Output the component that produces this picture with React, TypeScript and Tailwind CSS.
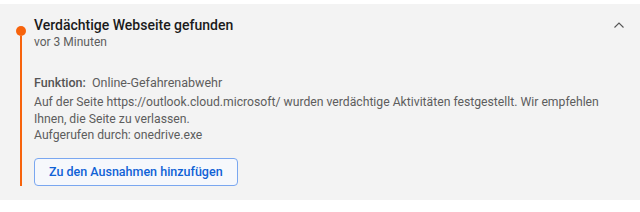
export default function App() {
  return (
    <div className="h-[212px] w-[640px] bg-white pt-1 font-['Roboto',sans-serif]">
      <div className="flex h-[196px] bg-[#f3f3f3]">
        {/* timeline */}
        <div className="ml-4 flex w-2.5 shrink-0 flex-col items-center">
          <div className="mt-[22px] h-2.5 w-2.5 rounded-full bg-[#f7630c]" />
          <div className="mb-[14px] w-0.5 flex-1 bg-[#f7630c]" />
        </div>

        <div className="ml-2 flex-1 pt-[13px]">
          <div className="flex items-start justify-between">
            <div>
              <h2 className="text-[14px] font-medium leading-[17px] text-[#1b1b1b]">Verdächtige Webseite gefunden</h2>
              <p className="text-[12px] leading-4 text-[#5d5d5d]">vor 3 Minuten</p>
            </div>
            <button className="mr-4 mt-[5px] text-[#555]">
              <svg width="10" height="6" viewBox="0 0 10 6" fill="none" stroke="currentColor" strokeWidth="1.1">
                <path d="M0.5 5.5L5 1l4.5 4.5" />
              </svg>
            </button>
          </div>

          <p className="mt-[24px] text-[12.5px] leading-[18px] text-[#5d5d5d]">
            <span className="mr-1.5 font-medium text-[#555]">Funktion:</span>
            Online-Gefahrenabwehr
          </p>

          <div className="mt-[2px] pr-2 text-[12.2px] leading-[16.7px] text-[#5d5d5d]">
            <p>
              Auf der Seite https://outlook.cloud.microsoft/ wurden verdächtige Aktivitäten festgestellt. Wir empfehlen
              <br />
              Ihnen, die Seite zu verlassen.
            </p>
            <p>Aufgerufen durch: onedrive.exe</p>
          </div>

          <button className="mt-[14px] h-7 rounded-[4px] border border-[#7aa7f0] bg-[#f6f8fc] px-[14px] text-[12.5px] font-medium text-[#1062d6]">
            Zu den Ausnahmen hinzufügen
          </button>
        </div>
      </div>
    </div>
  )
}
